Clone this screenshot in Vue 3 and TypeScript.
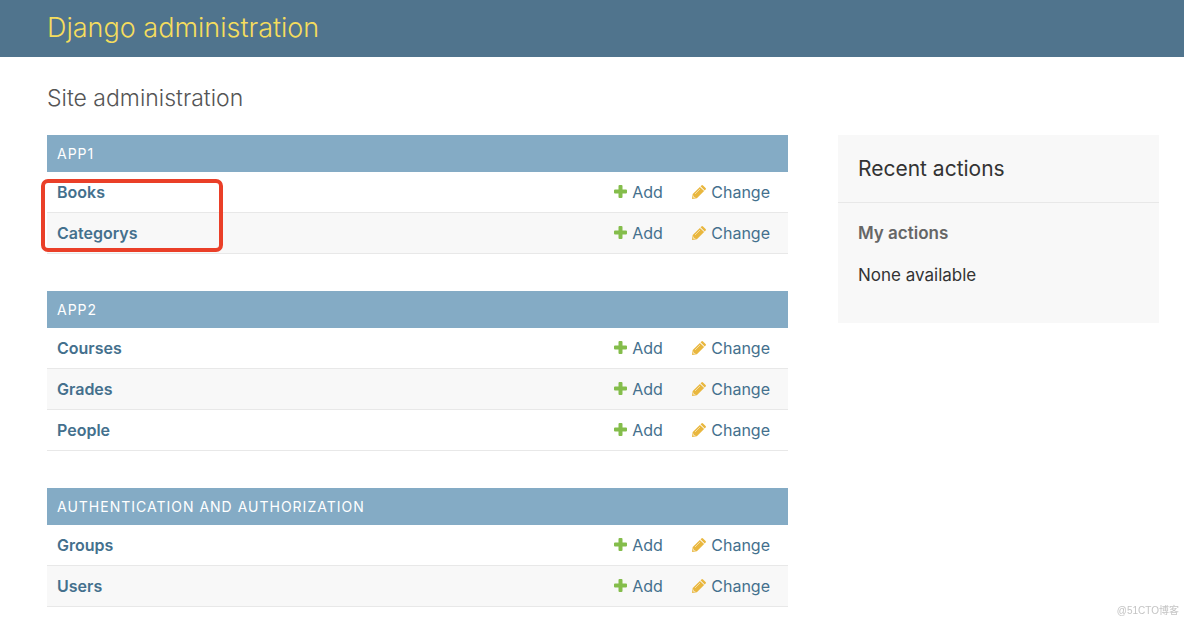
<script setup lang="ts">
interface AppModule {
  name: string
  models: string[]
  marked?: boolean
}

const apps: AppModule[] = [
  { name: 'App1', models: ['Books', 'Categorys'], marked: true },
  { name: 'App2', models: ['Courses', 'Grades', 'People'] },
  { name: 'Authentication and Authorization', models: ['Groups', 'Users'] },
]
</script>

<template>
  <div class="page">
    <header class="header">
      <h1 class="brand"><a href="#">Django administration</a></h1>
    </header>
    <div class="content">
      <h2 class="title">Site administration</h2>
      <div class="columns">
        <main class="modules">
          <section v-for="app in apps" :key="app.name" class="module">
            <table>
              <caption><a href="#">{{ app.name }}</a></caption>
              <tbody>
                <tr v-for="model in app.models" :key="model">
                  <th scope="row"><a href="#">{{ model }}</a></th>
                  <td class="add">
                    <a href="#">
                      <svg class="plus" viewBox="0 0 13 13" aria-hidden="true">
                        <path fill="#84bd4b" d="M5.5 0h2q1 0 1 1v3.500H12q1 0 1 1v2q0 1-1 1H8.500V12q0 1-1 1h-2q-1 0-1-1V8.500H1q-1 0-1-1v-2q0-1 1-1h3.500V1q0-1 1-1z" />
                      </svg>
                      Add
                    </a>
                  </td>
                  <td class="change">
                    <a href="#">
                      <svg class="pencil" viewBox="0 0 14 14" aria-hidden="true">
                        <path fill="#e9b73e" d="M0 14l.7-4.900L7.900 1.900 12.100 6.100 4.900 13.300z" />
                        <path fill="#e9b73e" d="M8.500 1.300l.9-.9q.8-.8 1.600 0l2.600 2.600q.8.800 0 1.600l-.9.900z" />
                        <path fill="none" stroke="#fff" stroke-opacity=".65" stroke-width=".8" d="M3 9l5-5M1.500 10.700v1.800h1.800" />
                      </svg>
                      Change
                    </a>
                  </td>
                </tr>
              </tbody>
            </table>
            <div v-if="app.marked" class="marker"></div>
          </section>
        </main>
        <aside class="sidebar">
          <h2>Recent actions</h2>
          <h3>My actions</h3>
          <p>None available</p>
        </aside>
      </div>
    </div>
    <div class="watermark">@51CTO博客</div>
  </div>
</template>

<style>
body {
  margin: 0;
  background: #fff;
}
</style>

<style scoped>
.page {
  font-family: Inter, "Liberation Sans", sans-serif;
  font-size: 16px;
  line-height: 20px;
  color: #333;
}

a {
  color: #44708d;
  text-decoration: none;
}

.header {
  padding: 10px 47px 11px;
  background: #50748d;
}

.brand {
  margin: 0;
  font-size: 27px;
  line-height: 36px;
  font-weight: 300;
}

.brand a {
  color: #f5dd5d;
}

.content {
  padding: 24px 25px 0 47px;
}

.title {
  margin: 0 0 20px;
  font-size: 23px;
  line-height: 34px;
  font-weight: 300;
  color: #555;
}

.columns {
  display: flex;
  align-items: flex-start;
  gap: 50px;
}

.modules {
  flex: 1;
}

.module {
  position: relative;
  margin-bottom: 37px;
}

.module:last-child {
  margin-bottom: 0;
}

table {
  width: 100%;
  border-collapse: separate;
  border-spacing: 0;
}

caption {
  padding: 8px 10px;
  background: #84abc5;
  text-align: left;
  font-size: 14px;
  line-height: 21px;
  letter-spacing: 1px;
  text-transform: uppercase;
}

caption a {
  color: #fff;
}

th,
td {
  padding: 10px;
  border-bottom: 1px solid #e8e8e8;
  text-align: left;
  white-space: nowrap;
}

th {
  font-weight: 600;
}

tr:nth-child(even) > * {
  background: #f8f8f8;
}

.add {
  width: 58px;
}

.change {
  width: 77px;
  padding-right: 18px;
}

td a {
  display: flex;
  align-items: center;
}

.plus {
  width: 13px;
  height: 13px;
  margin: 0 5px 1px 0;
}

.pencil {
  width: 14px;
  height: 14px;
  margin: 0 5px 0 0;
}

.marker {
  position: absolute;
  top: 44px;
  left: -6px;
  box-sizing: border-box;
  width: 182px;
  height: 73px;
  border: 4px solid #ea3f28;
  border-radius: 7px;
  pointer-events: none;
}

.sidebar {
  width: 321px;
  padding-bottom: 38px;
  background: #f8f8f8;
}

.sidebar h2 {
  margin: 0 0 20px;
  padding: 20px;
  border-bottom: 1px solid #e8e8e8;
  font-size: 21px;
  line-height: 27px;
  font-weight: 400;
}

.sidebar h3 {
  margin: 0 20px 22px;
  font-size: 17px;
  line-height: 20px;
  font-weight: 600;
  color: #666;
}

.sidebar p {
  margin: 0 20px;
  font-size: 17px;
}

.watermark {
  position: fixed;
  right: 5px;
  bottom: 4px;
  font: 10px/14px "Liberation Sans", "Noto Sans CJK SC", sans-serif;
  color: #c4c4c4;
}
</style>
